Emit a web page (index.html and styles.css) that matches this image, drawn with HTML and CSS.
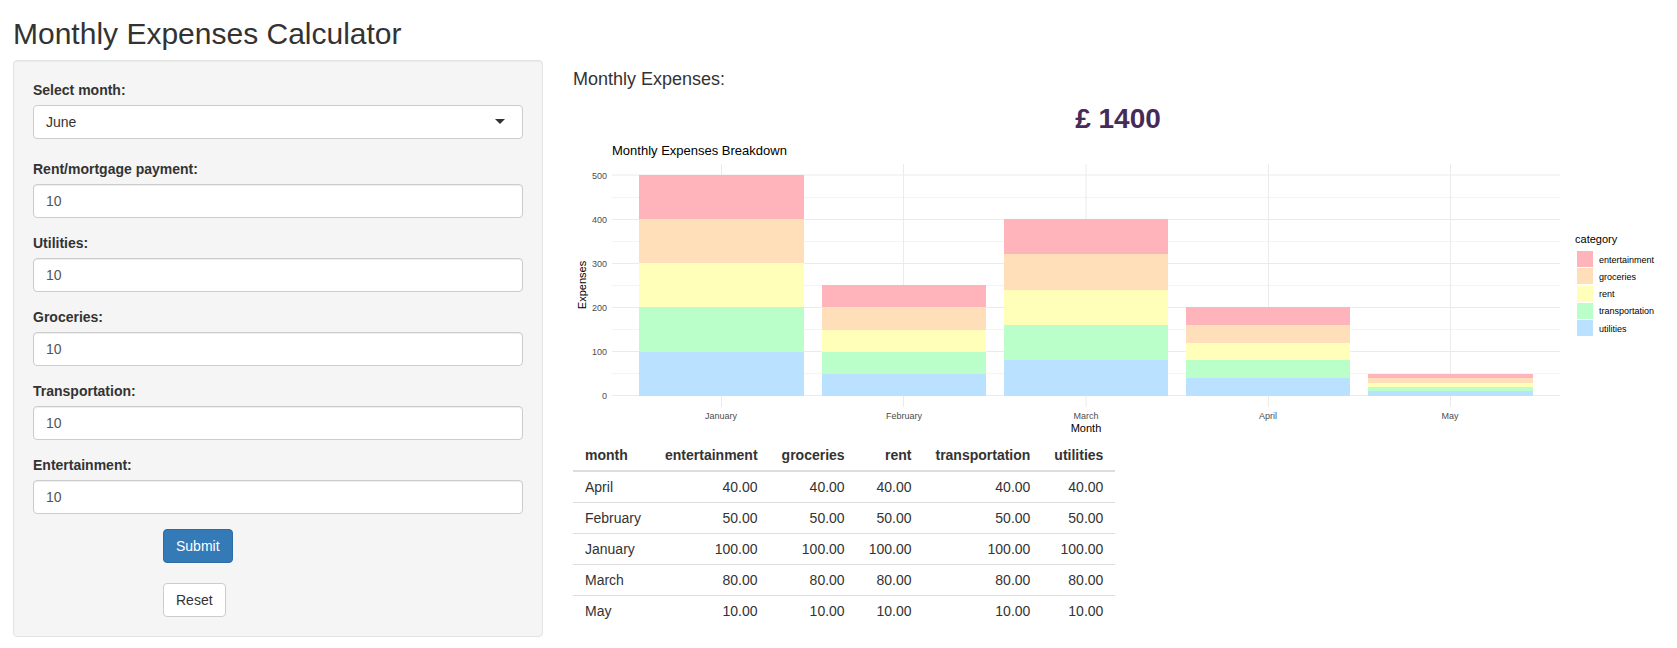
FILE: index.html
```html
<!DOCTYPE html>
<html lang="en">
<head>
<meta charset="utf-8">
<title>Monthly Expenses Calculator</title>
<link rel="stylesheet" href="styles.css">
</head>
<body>
<div class="container">
  <h2 class="page-title">Monthly Expenses Calculator</h2>
  <div class="layout">
    <form class="well">
      <div class="form-group form-group-select">
        <label for="month">Select month:</label>
        <div class="select-wrap">
          <select id="month" class="form-control form-select">
            <option>January</option>
            <option>February</option>
            <option>March</option>
            <option>April</option>
            <option>May</option>
            <option selected>June</option>
          </select>
          <span class="caret"></span>
        </div>
      </div>
      <div class="form-group">
        <label for="rent">Rent/mortgage payment:</label>
        <input id="rent" class="form-control" type="number" value="10">
      </div>
      <div class="form-group">
        <label for="utilities">Utilities:</label>
        <input id="utilities" class="form-control" type="number" value="10">
      </div>
      <div class="form-group">
        <label for="groceries">Groceries:</label>
        <input id="groceries" class="form-control" type="number" value="10">
      </div>
      <div class="form-group">
        <label for="transportation">Transportation:</label>
        <input id="transportation" class="form-control" type="number" value="10">
      </div>
      <div class="form-group">
        <label for="entertainment">Entertainment:</label>
        <input id="entertainment" class="form-control" type="number" value="10">
      </div>
      <div class="row">
        <div class="actions">
          <button class="btn btn-primary" type="button">Submit</button>
          <button class="btn" type="button">Reset</button>
        </div>
      </div>
    </form>
    <main class="main">
      <h4 class="subtitle">Monthly Expenses:</h4>
      <div class="total">£ 1400</div>
      <svg class="chart" viewBox="0 0 1090 300" role="img" aria-label="Monthly Expenses Breakdown">
        <text class="chart-title" x="39" y="19">Monthly Expenses Breakdown</text>
        <path class="grid-minor" d="M39 61.5H987M39 105.5H987M39 149.5H987M39 193.5H987M39 237.5H987"/>
        <path class="grid-major" d="M39 39H987M39 83.5H987M39 127.5H987M39 171.5H987M39 215.5H987M39 259.5H987M148.5 28V271M330.5 28V271M513 28V271M695.5 28V271M877.5 28V271"/>
        <g class="entertainment">
          <rect x="66" y="39" width="165" height="44"/>
          <rect x="249" y="149" width="164" height="22"/>
          <rect x="431" y="83" width="164" height="35"/>
          <rect x="613" y="171" width="164" height="18"/>
          <rect x="795" y="238" width="165" height="4"/>
          <rect x="1004" y="115" width="16" height="16"/>
        </g>
        <g class="groceries">
          <rect x="66" y="83" width="165" height="44"/>
          <rect x="249" y="171" width="164" height="23"/>
          <rect x="431" y="118" width="164" height="36"/>
          <rect x="613" y="189" width="164" height="18"/>
          <rect x="795" y="242" width="165" height="5"/>
          <rect x="1004" y="132" width="16" height="16"/>
        </g>
        <g class="rent">
          <rect x="66" y="127" width="165" height="44"/>
          <rect x="249" y="194" width="164" height="22"/>
          <rect x="431" y="154" width="164" height="35"/>
          <rect x="613" y="207" width="164" height="17"/>
          <rect x="795" y="247" width="165" height="4"/>
          <rect x="1004" y="150" width="16" height="16"/>
        </g>
        <g class="transportation">
          <rect x="66" y="171" width="165" height="45"/>
          <rect x="249" y="216" width="164" height="22"/>
          <rect x="431" y="189" width="164" height="35"/>
          <rect x="613" y="224" width="164" height="18"/>
          <rect x="795" y="251" width="165" height="4"/>
          <rect x="1004" y="167" width="16" height="16"/>
        </g>
        <g class="utilities">
          <rect x="66" y="216" width="165" height="44"/>
          <rect x="249" y="238" width="164" height="22"/>
          <rect x="431" y="224" width="164" height="36"/>
          <rect x="613" y="242" width="164" height="18"/>
          <rect x="795" y="255" width="165" height="5"/>
          <rect x="1004" y="184" width="16" height="16"/>
        </g>
        <g class="tick tick-y">
          <text x="34" y="43">500</text>
          <text x="34" y="87">400</text>
          <text x="34" y="131">300</text>
          <text x="34" y="175">200</text>
          <text x="34" y="219">100</text>
          <text x="34" y="263">0</text>
        </g>
        <g class="tick tick-x">
          <text x="148" y="283">January</text>
          <text x="331" y="283">February</text>
          <text x="513" y="283">March</text>
          <text x="695" y="283">April</text>
          <text x="877" y="283">May</text>
        </g>
        <text class="axis-title" x="513" y="296">Month</text>
        <text class="axis-title" transform="translate(13 149) rotate(-90)">Expenses</text>
        <text class="legend-title" x="1002" y="107">category</text>
        <g class="legend-label">
          <text x="1026" y="127">entertainment</text>
          <text x="1026" y="144">groceries</text>
          <text x="1026" y="161">rent</text>
          <text x="1026" y="178">transportation</text>
          <text x="1026" y="196">utilities</text>
        </g>
      </svg>
      <table class="table">
        <thead>
          <tr><th>month</th><th>entertainment</th><th>groceries</th><th>rent</th><th>transportation</th><th>utilities</th></tr>
        </thead>
        <tbody>
          <tr><td>April</td><td>40.00</td><td>40.00</td><td>40.00</td><td>40.00</td><td>40.00</td></tr>
          <tr><td>February</td><td>50.00</td><td>50.00</td><td>50.00</td><td>50.00</td><td>50.00</td></tr>
          <tr><td>January</td><td>100.00</td><td>100.00</td><td>100.00</td><td>100.00</td><td>100.00</td></tr>
          <tr><td>March</td><td>80.00</td><td>80.00</td><td>80.00</td><td>80.00</td><td>80.00</td></tr>
          <tr><td>May</td><td>10.00</td><td>10.00</td><td>10.00</td><td>10.00</td><td>10.00</td></tr>
        </tbody>
      </table>
    </main>
  </div>
</div>
</body>
</html>
```

FILE: styles.css
```css
* {
  box-sizing: border-box;
}

body {
  margin: 0;
  background: #fff;
  color: #333;
  font-family: "Liberation Sans", Arial, Helvetica, sans-serif;
  font-size: 14px;
  line-height: 20px;
}

.container {
  padding: 17px 14px 0 13px;
}

.page-title {
  margin: 0 0 10px;
  font-size: 30px;
  font-weight: 500;
  line-height: 33px;
}

.layout {
  display: flex;
  align-items: flex-start;
  gap: 30px;
}

.well {
  flex: 0 0 calc(100% / 3 - 20px);
  padding: 19px;
  background: #f5f5f5;
  border: 1px solid #e3e3e3;
  border-radius: 4px;
  box-shadow: inset 0 1px 1px rgba(0, 0, 0, 0.05);
}

.form-group {
  display: flex;
  flex-direction: column;
  gap: 5px;
  margin-bottom: 15px;
}

.form-group-select {
  margin-bottom: 20px;
}

label {
  font-weight: 700;
}

.form-control {
  width: 100%;
  height: 34px;
  padding: 6px 12px;
  background: #fff;
  border: 1px solid #ccc;
  border-radius: 4px;
  box-shadow: inset 0 1px 1px rgba(0, 0, 0, 0.075);
  color: #555;
  font: inherit;
  appearance: textfield;
}

.select-wrap {
  position: relative;
}

.form-select {
  display: block;
  padding: 0 12px;
  color: #333;
  box-shadow: none;
  appearance: none;
}

.caret {
  position: absolute;
  top: 14px;
  right: 18px;
  border-top: 5px solid #333;
  border-right: 5px solid transparent;
  border-left: 5px solid transparent;
  pointer-events: none;
}

.row {
  margin: 0 -15px;
}

.actions {
  display: flex;
  flex-direction: column;
  align-items: flex-start;
  gap: 20px;
  margin-left: 25%;
  padding: 0 15px;
}

.btn {
  padding: 6px 12px;
  background: #fff;
  border: 1px solid #ccc;
  border-radius: 4px;
  color: #333;
  font: inherit;
  cursor: pointer;
}

.btn-primary {
  background: #337ab7;
  border-color: #2e6da4;
  color: #fff;
}

.main {
  flex: 1;
  min-width: 0;
}

.subtitle {
  margin: 9px 0 10px;
  font-size: 18px;
  font-weight: 500;
  line-height: 20px;
}

.total {
  margin-bottom: -3px;
  color: #452a5a;
  font-size: 28px;
  font-weight: 700;
  line-height: 40px;
  text-align: center;
}

.chart {
  display: block;
  width: 100%;
  height: auto;
  margin-bottom: 4px;
}

.chart-title {
  fill: #000;
  font-size: 13px;
}

.grid-minor,
.grid-major {
  fill: none;
  stroke: #ebebeb;
}

.grid-minor {
  stroke: #f4f4f4;
}

.entertainment { fill: #ffb3ba; }
.groceries { fill: #ffdfba; }
.rent { fill: #ffffba; }
.transportation { fill: #baffc9; }
.utilities { fill: #bae1ff; }

.tick {
  fill: #4d4d4d;
  font-size: 9px;
}

.tick-y {
  text-anchor: end;
}

.tick-x,
.axis-title {
  text-anchor: middle;
}

.axis-title,
.legend-title {
  fill: #000;
  font-size: 11px;
}

.legend-label {
  fill: #000;
  font-size: 9px;
}

.table {
  border-collapse: collapse;
}

.table th,
.table td {
  padding: 5px 12px;
  text-align: right;
}

.table th:first-child,
.table td:first-child {
  text-align: left;
}

.table th {
  border-bottom: 2px solid #ddd;
}

.table tbody tr + tr td {
  border-top: 1px solid #ddd;
}
```
